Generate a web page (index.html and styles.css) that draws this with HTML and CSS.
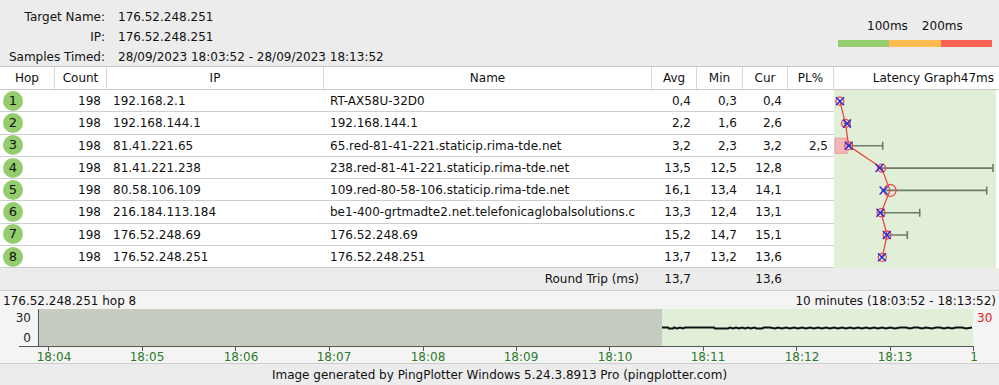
FILE: index.html
```html
<!DOCTYPE html>
<html lang="en">
<head>
    <meta charset="UTF-8">
    <title>PingPlotter - 176.52.248.251</title>
    <link rel="stylesheet" href="styles.css">
</head>
<body>
    <div class="summary">
        <div class="target">
            <div class="lbl">Target Name:</div><div>176.52.248.251</div>
            <div class="lbl">IP:</div><div>176.52.248.251</div>
            <div class="lbl">Samples Timed:</div><div>28/09/2023 18:03:52 - 28/09/2023 18:13:52</div>
        </div>
        <div class="legend">
            <div class="legend-labels"><span>100ms</span><span>200ms</span></div>
            <div class="legend-bar"><i class="good"></i><i class="warn"></i><i class="bad"></i></div>
        </div>
    </div>

    <div class="trace">
        <div class="th">Hop</div>
        <div class="th">Count</div>
        <div class="th">IP</div>
        <div class="th">Name</div>
        <div class="th">Avg</div>
        <div class="th">Min</div>
        <div class="th">Cur</div>
        <div class="th">PL%</div>
        <div class="th graph-head">Latency Graph47ms</div>

        <div class="graph">
            <svg width="165" height="178" viewBox="0 0 165 178">
                <rect x="0" y="0" width="162" height="178" fill="#e1efd9"/>
                <g stroke="#6d7b6d" stroke-width="1.6" fill="none">
                    <path d="M9.6 33.5H16M16 29.5V37.5"/>
                    <path d="M11.9 55.8H48.7M48.7 51.8V59.8"/>
                    <path d="M44.5 78.1H159M159 74.1V82.1"/>
                    <path d="M47.4 100.4H152.7M152.7 96.4V104.4"/>
                    <path d="M44.2 122.7H85.7M85.7 118.7V126.7"/>
                    <path d="M51.5 145H73.3M73.3 141V149"/>
                </g>
                <rect x="1" y="48.3" width="12" height="15" fill="#f4b6b6" stroke="#ea9a9a"/>
                <polyline points="5.8,11.2 11.5,33.5 14.7,55.8 47.7,78.1 56,100.4 47.1,122.7 53.1,145 48.3,167.3" fill="none" stroke="#f03a3a" stroke-width="1.2"/>
                <g fill="none" stroke="#f04848" stroke-width="1.3">
                    <circle cx="5.8" cy="11.2" r="4"/>
                    <circle cx="11.5" cy="33.5" r="4"/>
                    <circle cx="14.7" cy="55.8" r="4"/>
                    <circle cx="47.7" cy="78.1" r="4"/>
                    <circle cx="56" cy="100.4" r="6"/>
                    <circle cx="47.1" cy="122.7" r="4"/>
                    <circle cx="53.1" cy="145" r="4"/>
                    <circle cx="48.3" cy="167.3" r="4"/>
                </g>
                <g stroke="#2626e0" stroke-width="1.4">
                    <path d="M2 7.2L10 15.2M10 7.2L2 15.2"/>
                    <path d="M9 29.5L17 37.5M17 29.5L9 37.5"/>
                    <path d="M10.7 51.8L18.7 59.8M18.7 51.8L10.7 59.8"/>
                    <path d="M41.5 74.1L49.5 82.1M49.5 74.1L41.5 82.1"/>
                    <path d="M45.6 96.4L53.6 104.4M53.6 96.4L45.6 104.4"/>
                    <path d="M42.4 118.7L50.4 126.7M50.4 118.7L42.4 126.7"/>
                    <path d="M48.8 141L56.8 149M56.8 141L48.8 149"/>
                    <path d="M44 163.3L52 171.3M52 163.3L44 171.3"/>
                </g>
            </svg>
        </div>

        <div class="td hop"><span class="badge">1</span></div><div class="td num">198</div><div class="td">192.168.2.1</div><div class="td">RT-AX58U-32D0</div><div class="td num">0,4</div><div class="td num">0,3</div><div class="td num">0,4</div><div class="td num"></div>
        <div class="td hop"><span class="badge">2</span></div><div class="td num">198</div><div class="td">192.168.144.1</div><div class="td">192.168.144.1</div><div class="td num">2,2</div><div class="td num">1,6</div><div class="td num">2,6</div><div class="td num"></div>
        <div class="td hop"><span class="badge">3</span></div><div class="td num">198</div><div class="td">81.41.221.65</div><div class="td">65.red-81-41-221.staticip.rima-tde.net</div><div class="td num">3,2</div><div class="td num">2,3</div><div class="td num">3,2</div><div class="td num">2,5</div>
        <div class="td hop"><span class="badge">4</span></div><div class="td num">198</div><div class="td">81.41.221.238</div><div class="td">238.red-81-41-221.staticip.rima-tde.net</div><div class="td num">13,5</div><div class="td num">12,5</div><div class="td num">12,8</div><div class="td num"></div>
        <div class="td hop"><span class="badge">5</span></div><div class="td num">198</div><div class="td">80.58.106.109</div><div class="td">109.red-80-58-106.staticip.rima-tde.net</div><div class="td num">16,1</div><div class="td num">13,4</div><div class="td num">14,1</div><div class="td num"></div>
        <div class="td hop"><span class="badge">6</span></div><div class="td num">198</div><div class="td">216.184.113.184</div><div class="td">be1-400-grtmadte2.net.telefonicaglobalsolutions.c</div><div class="td num">13,3</div><div class="td num">12,4</div><div class="td num">13,1</div><div class="td num"></div>
        <div class="td hop"><span class="badge">7</span></div><div class="td num">198</div><div class="td">176.52.248.69</div><div class="td">176.52.248.69</div><div class="td num">15,2</div><div class="td num">14,7</div><div class="td num">15,1</div><div class="td num"></div>
        <div class="td hop"><span class="badge">8</span></div><div class="td num">198</div><div class="td">176.52.248.251</div><div class="td">176.52.248.251</div><div class="td num">13,7</div><div class="td num">13,2</div><div class="td num">13,6</div><div class="td num"></div>

        <div class="rt rt-label">Round Trip (ms)</div>
        <div class="rt num">13,7</div>
        <div class="rt"></div>
        <div class="rt num">13,6</div>
        <div class="rt"></div>
        <div class="rt"></div>
    </div>

    <div class="history">
        <div class="history-head">
            <span>176.52.248.251 hop 8</span>
            <span>10 minutes (18:03:52 - 18:13:52)</span>
        </div>
        <svg class="history-chart" width="999" height="54" viewBox="0 309 999 54">
            <rect x="39" y="309" width="623" height="37" fill="#c6ccc0"/>
            <rect x="662" y="309" width="311" height="37" fill="#e1efd9"/>
            <polyline fill="none" stroke="#111" stroke-width="2" points="662,327.5 668,327.5 669,328.5 673,328.5 674,327.5 677,328.5 680,327.5 683,328.5 685,327.5 690,327.5 700,327.5 710,327.5 714,327.5 715,328.5 728,328.5 730,327.5 733,328.5 736,327.5 739,328.5 742,327.5 745,328.5 748,327.5 751,328.5 754,327.5 757,328.5 762,328.5 764,327.5 770,327.5 775,328.5 778,327.5 782,328.5 786,327.5 790,328.5 794,327.5 798,328.5 802,327.5 806,328.5 810,327.5 814,328.5 818,327.5 822,328.5 826,327.5 830,328.5 834,327.5 838,328.5 842,327.5 846,328.5 850,327.5 854,328.5 858,327.5 862,328.5 866,327.5 870,328.5 874,327.5 878,328.5 882,327.5 886,328.5 890,327.5 895,328.5 900,327.5 906,327.5 910,328.5 914,327.5 918,327.5 922,328.5 926,327.5 932,328.5 936,327.5 940,327.5 944,328.5 948,327.5 952,328.5 956,327.5 962,327.5 966,328.5 972,327.5"/>
            <g stroke="#555" stroke-width="1">
                <path d="M38.5 309V346"/>
                <path d="M19 346.5H973"/>
                <path d="M48.5 346V351M142.5 346V351M235.5 346V351M329.5 346V351M423.5 346V351M516.5 346V351M609.5 346V351M703.5 346V351M796.5 346V351M890.5 346V351M973.5 346V351"/>
            </g>
            <g class="axis-y">
                <text x="31" y="322" text-anchor="end">30</text>
                <text x="31" y="342" text-anchor="end">0</text>
                <text x="977" y="322" class="max">30</text>
            </g>
            <g class="axis-x" text-anchor="middle">
                <text x="54" y="361">18:04</text>
                <text x="147" y="361">18:05</text>
                <text x="241" y="361">18:06</text>
                <text x="334" y="361">18:07</text>
                <text x="428" y="361">18:08</text>
                <text x="521" y="361">18:09</text>
                <text x="615" y="361">18:10</text>
                <text x="708" y="361">18:11</text>
                <text x="802" y="361">18:12</text>
                <text x="895" y="361">18:13</text>
                <text x="974" y="361">1</text>
            </g>
        </svg>
    </div>

    <div class="footer">Image generated by PingPlotter Windows 5.24.3.8913 Pro (pingplotter.com)</div>
</body>
</html>
```

FILE: styles.css
```css
* {
    margin: 0;
    padding: 0;
    box-sizing: border-box;
}

body {
    font-family: 'DejaVu Sans', Verdana, sans-serif;
    font-size: 12px;
    color: #111;
    background: #fff;
    width: 999px;
    overflow: hidden;
}

.summary {
    height: 67px;
    background: #ececec;
    display: flex;
    justify-content: space-between;
    border-bottom: 1px solid #c9c9c9;
}

.target {
    display: grid;
    grid-template-columns: 105px auto;
    column-gap: 13px;
    padding-top: 7px;
    line-height: 20px;
}

.target .lbl {
    text-align: right;
}

.legend {
    width: 161px;
    padding-top: 18px;
}

.legend-labels {
    display: flex;
    gap: 14px;
    padding-left: 29px;
    line-height: 16px;
}

.legend-bar {
    display: flex;
    height: 7px;
    margin-top: 6px;
    width: 154px;
}

.legend-bar i {
    flex: 1;
}

.legend-bar .good { background: #93cd6d; }
.legend-bar .warn { background: #fdbb4f; }
.legend-bar .bad { background: #fb6150; }

.trace {
    display: grid;
    grid-template-columns: 55px 52px 217px 328px 45px 46px 45px 46px 1fr;
    grid-template-rows: 23px repeat(8, 22.3px) 22px;
}

.th {
    background: #fff;
    border-right: 1px solid #d8d8d8;
    border-bottom: 1px solid #c9c9c9;
    text-align: center;
    line-height: 22px;
}

.graph-head {
    border-right: none;
    text-align: right;
    padding-right: 5px;
}

.graph {
    grid-column: 9;
    grid-row: 2 / span 8;
    background: #fff;
}

.graph svg {
    display: block;
}

.td {
    background: #fff;
    border-bottom: 1px solid #cfcfcf;
    line-height: 22px;
    padding: 0 6px;
    white-space: nowrap;
    overflow: hidden;
}

.td.num {
    text-align: right;
}

.td.hop {
    padding: 0 3px;
    display: flex;
    align-items: center;
}

.badge {
    width: 20px;
    height: 20px;
    border-radius: 50%;
    background: #93cd6d;
    text-align: center;
    line-height: 20px;
    font-size: 13px;
}

.rt {
    background: #ececec;
    line-height: 22px;
    padding: 0 6px;
}

.rt.num {
    text-align: right;
}

.rt-label {
    grid-column: 1 / span 4;
    text-align: right;
    padding-right: 13px;
}

.history {
    background: #f4f4f4;
    border-top: 1px solid #cdcdcd;
}

.history-head {
    display: flex;
    justify-content: space-between;
    padding: 0 3px;
    line-height: 20px;
    height: 18px;
}

.history-chart {
    display: block;
}

.history-chart text {
    font-family: 'DejaVu Sans', Verdana, sans-serif;
    font-size: 12px;
}

.axis-y text {
    fill: #222;
}

.axis-y .max {
    fill: #e01818;
}

.axis-x text {
    fill: #2a7a2a;
}

.footer {
    background: #ececec;
    border-top: 1px solid #cdcdcd;
    text-align: center;
    line-height: 22px;
    height: 23px;
}
```
